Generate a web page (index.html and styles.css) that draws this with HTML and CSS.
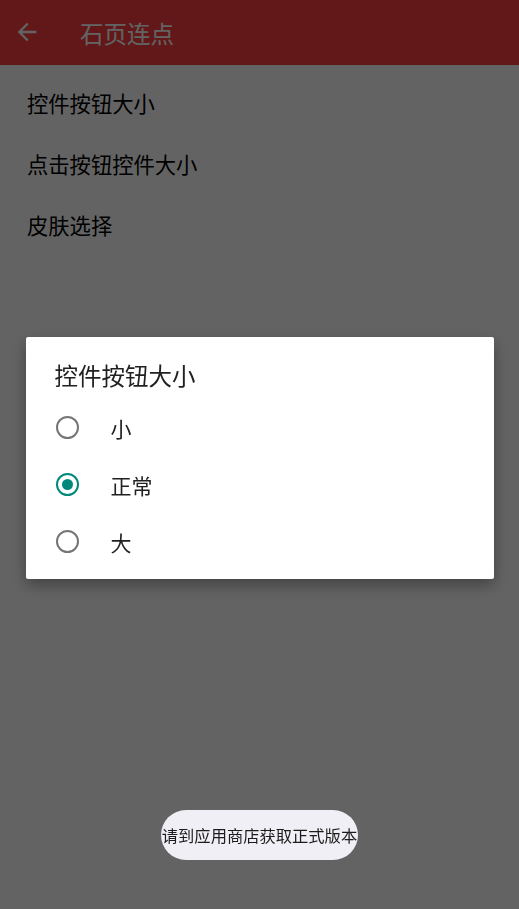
FILE: index.html
```html
<!DOCTYPE html>
<html lang="zh-CN">
<head>
  <meta charset="UTF-8">
  <meta name="viewport" content="width=device-width, initial-scale=1.0">
  <title>石页连点</title>
  <link rel="stylesheet" href="styles.css">
</head>
<body>
  <div class="app">
    <header class="toolbar">
      <svg class="back" width="28" height="28" viewBox="0 0 24 24">
        <path d="M20 11H7.83l5.59-5.59L12 4l-8 8 8 8 1.41-1.41L7.83 13H20v-2z" fill="#fff"/>
      </svg>
      <span class="toolbar-title">石页连点</span>
    </header>
    <ul class="settings">
      <li>控件按钮大小</li>
      <li>点击按钮控件大小</li>
      <li>皮肤选择</li>
    </ul>
  </div>

  <div class="scrim">
    <div class="dialog">
      <div class="dialog-title">控件按钮大小</div>
      <label class="option"><span class="radio"></span>小</label>
      <label class="option"><span class="radio checked"></span>正常</label>
      <label class="option"><span class="radio"></span>大</label>
    </div>
    <div class="toast">请到应用商店获取正式版本</div>
  </div>
</body>
</html>
```

FILE: styles.css
```css
body {
  margin: 0;
  background: #fff;
  font-family: "Noto Sans CJK SC", sans-serif;
  color: #000;
}
.app {
  height: 909px;
}
.toolbar {
  height: 65px;
  background: #fc3f42;
  display: flex;
  align-items: center;
  padding-left: 13px;
}
.back {
  margin-right: 39px;
  margin-top: -2px;
}
.toolbar-title {
  color: #fff;
  font-size: 23.5px;
}
.settings {
  list-style: none;
  margin: 0;
  padding: 7px 0 0 27px;
}
.settings li {
  height: 61px;
  line-height: 61px;
  font-size: 21.3px;
}
.scrim {
  position: fixed;
  inset: 0;
  background: rgba(0, 0, 0, 0.61);
  display: flex;
  flex-direction: column;
  align-items: center;
}
.dialog {
  margin-top: 337px;
  width: 468px;
  height: 242px;
  background: #fff;
  border-radius: 2px;
  box-shadow: 0 6px 16px rgba(0, 0, 0, 0.35);
  box-sizing: border-box;
  padding: 21px 0 0 29px;
}
.dialog-title {
  font-size: 23.5px;
  color: #212121;
  height: 34px;
  line-height: 34px;
  margin-bottom: 7px;
}
.option {
  display: flex;
  align-items: center;
  height: 57px;
  font-size: 21px;
  color: #212121;
}
.radio {
  width: 23px;
  height: 23px;
  border: 2px solid #757575;
  border-radius: 50%;
  box-sizing: border-box;
  margin-left: 1px;
  margin-right: 32px;
  display: flex;
  align-items: center;
  justify-content: center;
}
.radio.checked {
  border-color: #00897b;
}
.radio.checked::after {
  content: "";
  width: 11px;
  height: 11px;
  border-radius: 50%;
  background: #00897b;
}
.toast {
  margin-top: 231px;
  height: 50px;
  padding: 0 1px;
  border-radius: 25px;
  background: #f0eff5;
  color: #1c1c1c;
  font-size: 16.3px;
  line-height: 50px;
  white-space: nowrap;
}
```
